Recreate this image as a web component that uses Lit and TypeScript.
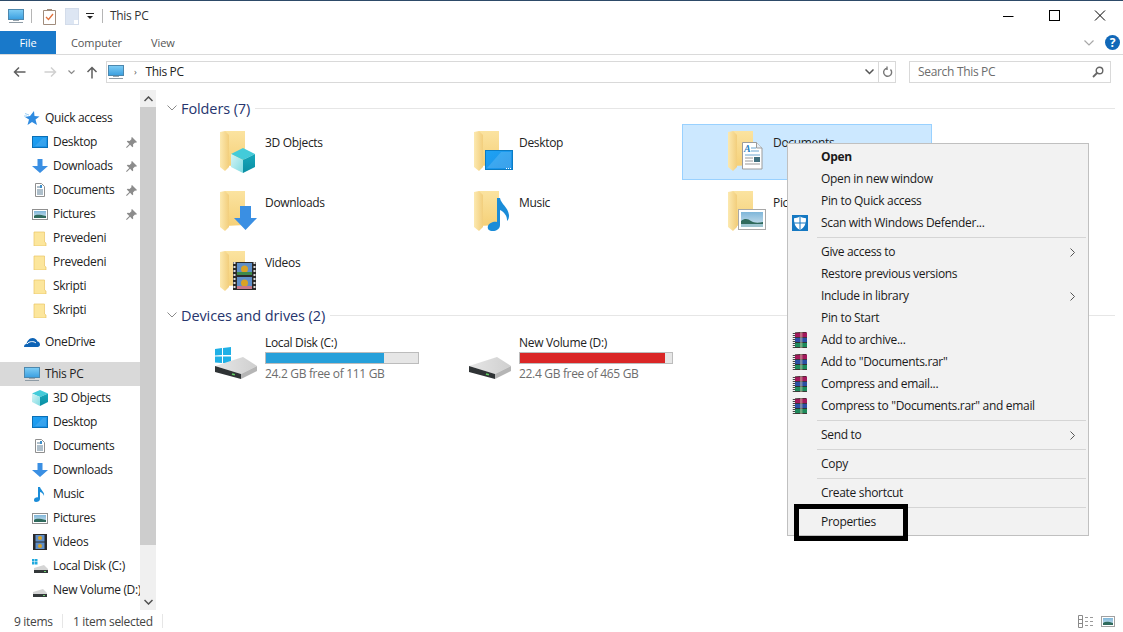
import { LitElement, html, css, svg } from "lit";
import { customElement } from "lit/decorators.js";

const folder = svg`<polygon points="9,3 29,3 29,37 9,38" fill="url(#fb)"/><polygon points="4,4 9,3 13,7 13,39 9,43 4,39" fill="url(#fd)"/>`;

const cube = (o = 0) => svg`<g transform="translate(${o} 0)"><polygon points="27,20 39,26 27,32 15,26" fill="#43cbd9"/><polygon points="15,26 27,32 27,45 15,39" fill="url(#cl)"/><polygon points="39,26 27,32 27,45 39,39" fill="url(#cr)"/></g>`;
const monitor = svg`<rect x="15.5" y="22.5" width="27" height="19" fill="url(#scr)" stroke="#0b7cc4"/><polygon points="17,40 31,24 41,24 41,40" fill="#fff" opacity=".14"/><path d="M36 40.5h5" stroke="#fff" stroke-dasharray="1 1"/>`;
const arrow = svg`<polygon points="24,18 35,18 35,30 41,30 29.5,42 18,30 24,30" fill="#3a8fe3"/>`;
const note = svg`<path d="M27 10h3c1 6 8 9 9 17 .2 2-.5 5-2 6 .5-5-3-9-7-11v15c0 4-4 6-7 6-4 0-6-2-5-5 1-3 6-5 9-4z" fill="#1a8cd8"/>`;
const picture = svg`<rect x="14.5" y="21.5" width="27" height="20" fill="#fff" stroke="#a8a8a8"/><rect x="17" y="24" width="22" height="15" fill="url(#sky)"/><path d="M17 33c4-3 7-2 10 0s7 2 12 1v5H17z" fill="#2f6a5c"/><rect x="17" y="36" width="22" height="3" fill="#9cc4cf"/>`;
const doc = svg`<path d="M18.5 14.5h14l5.500 5.500v21h-19.500z" fill="#fff" stroke="#9b9b9b"/><path d="M32.500 14.500v5.500h5.500" fill="#e6eef5" stroke="#9b9b9b"/><text x="20" y="24" font-family="Liberation Serif, serif" font-style="italic" font-weight="700" font-size="10" fill="#2a7fc0">A</text><path d="M27 20h5M27 23h8M21 27h15" stroke="#6aa5cf"/><path d="M21 30h8M21 33h8M21 36h15" stroke="#999"/><rect x="30" y="29" width="6" height="5" fill="#41707e"/>`;
const film = svg`<rect x="17" y="14" width="23" height="28" fill="#2a2a2a"/><path d="M18.500 14v28M38.500 14v28" stroke="#ddd" stroke-width="2" stroke-dasharray="2 2"/><rect x="21" y="15" width="15" height="12" fill="#5f8fc9"/><rect x="21" y="29" width="15" height="12" fill="#5f8fc9"/><circle cx="28.500" cy="21" r="3.500" fill="#d9a326"/><circle cx="28.500" cy="35" r="3.500" fill="#d9a326"/><rect x="21" y="24" width="15" height="3" fill="#3f8a4a"/><rect x="21" y="38" width="15" height="3" fill="#c9788a"/>`;

const bigIcon = (o: unknown) => html`<svg class="big" width="48" height="50" viewBox="0 0 48 50">${folder}${o}</svg>`;

const s = (c: unknown, w = 16) => html`<svg width=${w} height="16" viewBox="0 0 16 16">${c}</svg>`;
const pcIcon = svg`<rect x=".5" y="1.500" width="15" height="10" fill="url(#scr2)" stroke="#4c87ad"/><rect x="5" y="12" width="6" height="1" fill="#9aa7b0"/><rect x="1" y="14" width="14" height="1" fill="#8e9ba5"/>`;
const icons: Record<string, unknown> = {
  star: svg`<polygon points="10,1 10.500,6 15.500,6.500 11.500,9.500 13,15 8,12 3.500,15 5,9.500 1,7 6,6" fill="#2f8be0"/><path d="M1 3.500l4 1.500M0 6h3" stroke="#9ed0f5"/>`,
  desktop: svg`<rect x=".5" y="2.500" width="15" height="11" fill="url(#scr)" stroke="#0b6fb5"/><polygon points="3,12 11,4 14,4 14,12" fill="#fff" opacity=".12"/>`,
  down: svg`<polygon points="5.500,1 10.500,1 10.500,8 16,8 8,15 0,8 5.500,8" fill="#3a8fe3"/>`,
  docs: svg`<path d="M3.500 1.500h6l3 3v10h-9z" fill="#fff" stroke="#8f8f8f"/><path d="M5 5h3M5 8h6M5 10h6M5 12h6" stroke="#5c7f96"/><rect x="8" y="3" width="2" height="3" fill="#3f8fc9"/>`,
  pics: svg`<rect x=".5" y="3.500" width="15" height="10" fill="#fff" stroke="#8f8f8f"/><rect x="2" y="5" width="12" height="7" fill="url(#sky)"/><path d="M2 10c3-2 6-1 12 0v2H2z" fill="#2f6a5c"/>`,
  fold: svg`<path d="M2.500 2.500h9.500v11.500h2v1.500h-11.500z" fill="#fde38f"/><path d="M2 2h10.500v10l1.500 1v3h-12z" fill="#fce69c" stroke="#e9c466" stroke-width=".7"/>`,
  cloud: svg`<path d="M0 13c0-2 1-3 2.500-3 .5-3 3-6 6-6 2.500 0 4 1.500 5 3.500 1.500 0 2.500 1.500 2.500 3 0 1.500-1 2.500-2.500 2.500z" fill="#0d63b5"/><path d="M3 10c2-3 7-3 9-1" stroke="#fff" fill="none"/>`,
  pc: pcIcon,
  cube: svg`<polygon points="8,0 16,3.500 8,7 0,3.500" fill="#43cbd9"/><polygon points="0,3.500 8,7 8,16 0,12" fill="url(#cl)"/><polygon points="16,3.500 8,7 8,16 16,12" fill="url(#cr)"/>`,
  music: svg`<path d="M6 1h2c.5 3 5 5 4 9-.5-2-2-3.500-4-4v7c0 2-2 3-4 3-1.500 0-2-1-2-2 0-2 2.500-3 4-2.500z" fill="#1a8cd8"/>`,
  video: svg`<rect x="1" y="0" width="14" height="16" fill="#2a2a2a"/><rect x="3.500" y="1" width="9" height="6.500" fill="#5f8fc9"/><rect x="3.500" y="8.500" width="9" height="6.500" fill="#5f8fc9"/><circle cx="8" cy="4" r="2" fill="#d9a326"/><circle cx="8" cy="12" r="2" fill="#d9a326"/>`,
  diskC: svg`<rect x="0" y="1" width="2.500" height="2.500" fill="#1fa9de"/><rect x="3" y="1" width="2.500" height="2.500" fill="#1fa9de"/><rect x="0" y="4" width="2.500" height="2.500" fill="#1fa9de"/><rect x="3" y="4" width="2.500" height="2.500" fill="#1fa9de"/><polygon points="2,10 12,7 16,11 16,15 2,15" fill="#d5d5d5"/><rect x="2" y="12" width="14" height="3" fill="#33383a"/><rect x="12" y="13" width="2" height="1" fill="#6fd06f"/>`,
  disk: svg`<polygon points="1,10 11,7 15,11 15,15 1,15" fill="#d5d5d5"/><rect x="1" y="12" width="14" height="3" fill="#33383a"/><rect x="11" y="13" width="2" height="1" fill="#6fd06f"/>`,
  defender: svg`<rect width="16" height="16" fill="#1578c2"/><path d="M8 1.500c2 1.200 4 1.700 6 1.700 0 6-1.500 9.500-6 11.500-4.500-2-6-5.500-6-11.500 2 0 4-.5 6-1.700z" fill="#fff"/><path d="M8 1.500v13M2 8h12" stroke="#1578c2"/>`,
  rar: svg`<path d="M3 1l11-1 1 1v4H3z" fill="#a3195b"/><path d="M3 5.500h12v5H3z" fill="#2b4fa5"/><path d="M3 10.500h12v5H3z" fill="#1d8a5b"/><path d="M3 .8l11.500-.6M3 5.500h12M3 10.500h12M3 15.500h12" stroke="#2a1a1a" stroke-width=".8"/><path d="M2 1v15" stroke="#444" stroke-width="2.500" stroke-dasharray="1 1"/><rect x="8" y="0" width="2.500" height="16" fill="#d8cfae" opacity=".45"/>`,
};

const pin = html`<svg class="pin" width="11" height="11" viewBox="0 0 11 11"><path d="M6 0l5 5-1 .8-1-.4-2 2 .2 2-.8.8-2.300-2.500L.8 11 0 10.200l3.300-3.300L.8 4.600l.8-.8 2 .2 2-2-.4-1z" fill="#8c8c8c"/></svg>`;

const drive = (win: boolean) => html`<svg class="drive" width="44" height="34" viewBox="0 0 44 34">
  ${win ? svg`<g fill="#1fb0e6"><polygon points="1,3 8,2 8,9 1,9.500"/><polygon points="9,2 17,1 17,9 9,9"/><polygon points="1,10.500 8,10.500 8,17 1,16.500"/><polygon points="9,10.500 17,10.500 17,18 9,17"/></g>` : ""}
  <polygon points="1,20 29,11 43,20 27,28" fill="url(#dt)"/>
  <polygon points="1,20 27,28 27,33 1,26" fill="#2f3335"/>
  <polygon points="27,28 43,20 43,25 27,33" fill="#b5b5b5"/>
  <rect x="18" y="27.500" width="3" height="1.500" fill="#63d063" transform="rotate(15 19 28)"/>
</svg>`;

const chev = html`<svg class="chev" width="10" height="6" viewBox="0 0 10 6"><path d="M.5.500L5 5 9.500.500" fill="none" stroke="#8a8a8a"/></svg>`;
const subArrow = html`<svg class="sub" width="5" height="9" viewBox="0 0 5 9"><path d="M.5.500l4 4-4 4" fill="none" stroke="#555"/></svg>`;

type Nav = { t: string; i: string; top?: boolean; pin?: boolean; gap?: boolean; sel?: boolean };
const nav: Nav[] = [
  { t: "Quick access", i: "star", top: true },
  { t: "Desktop", i: "desktop", pin: true },
  { t: "Downloads", i: "down", pin: true },
  { t: "Documents", i: "docs", pin: true },
  { t: "Pictures", i: "pics", pin: true },
  { t: "Prevedeni", i: "fold" },
  { t: "Prevedeni", i: "fold" },
  { t: "Skripti", i: "fold" },
  { t: "Skripti", i: "fold" },
  { t: "OneDrive", i: "cloud", top: true, gap: true },
  { t: "This PC", i: "pc", top: true, gap: true, sel: true },
  { t: "3D Objects", i: "cube" },
  { t: "Desktop", i: "desktop" },
  { t: "Documents", i: "docs" },
  { t: "Downloads", i: "down" },
  { t: "Music", i: "music" },
  { t: "Pictures", i: "pics" },
  { t: "Videos", i: "video" },
  { t: "Local Disk (C:)", i: "diskC" },
  { t: "New Volume (D:)", i: "disk" },
];

const tiles: { t: string; o: unknown; sel?: boolean }[] = [
  { t: "3D Objects", o: cube() },
  { t: "Desktop", o: monitor },
  { t: "Documents", o: doc, sel: true },
  { t: "Downloads", o: arrow },
  { t: "Music", o: note },
  { t: "Pictures", o: picture },
  { t: "Videos", o: film },
];

type Mi = { t?: string; i?: string; b?: boolean; sub?: boolean };
const menu: Mi[] = [
  { t: "Open", b: true },
  { t: "Open in new window" },
  { t: "Pin to Quick access" },
  { t: "Scan with Windows Defender...", i: "defender" },
  {},
  { t: "Give access to", sub: true },
  { t: "Restore previous versions" },
  { t: "Include in library", sub: true },
  { t: "Pin to Start" },
  { t: "Add to archive...", i: "rar" },
  { t: 'Add to "Documents.rar"', i: "rar" },
  { t: "Compress and email...", i: "rar" },
  { t: 'Compress to "Documents.rar" and email', i: "rar" },
  {},
  { t: "Send to", sub: true },
  {},
  { t: "Copy" },
  {},
  { t: "Create shortcut" },
  {},
  { t: "Properties" },
];

@customElement("app-root")
export class AppRoot extends LitElement {
  static styles = css`
    :host { display: flex; flex-direction: column; position: relative; width: 1123px; height: 632px; overflow: hidden; background: #fff; color: #1a1a1a; font: 12px "Open Sans", "Noto Sans", sans-serif; letter-spacing: -0.32px; }
    svg { display: block; flex: none; }
    .defs { width: 0; height: 0; position: absolute; }
    .title { height: 30px; border-top: 1px solid #2d4a68; display: flex; align-items: center; padding-left: 8px; }
    .vsep { width: 1px; height: 14px; background: #b5b5b5; }
    .ttext { margin: 0 0 2px 7px; color: #333; }
    .winbtns { margin-left: auto; display: flex; gap: 30px; padding-right: 15px; align-items: center; }
    .ribbon { height: 23px; border-bottom: 1px solid #dadada; display: flex; align-items: stretch; font-size: 11px; color: #555; letter-spacing: -0.1px; }
    .tab-file { width: 56px; background: #1979ca; color: #fff; display: flex; align-items: center; justify-content: center; }
    .tab { display: flex; align-items: center; }
    .tab.c { margin-left: 15px; }
    .tab.v { margin-left: 29px; }
    .rib-right { margin-left: auto; display: flex; align-items: center; gap: 11px; padding-right: 3px; }
    .help { width: 15px; height: 15px; border-radius: 50%; background: #1168b8; color: #fff; font: 700 12px "Open Sans", sans-serif; display: flex; align-items: center; justify-content: center; }
    .addr { height: 35px; display: flex; padding: 6px 13px 0; box-sizing: border-box; align-items: flex-start; }
    .navbtns { display: flex; align-items: center; height: 22px; width: 93px; flex: none; }
    .addrbox { width: 788px; height: 20px; margin-right: 13px; border: 1px solid #d9d9d9; display: flex; align-items: center; flex: none; }
    .addrbox > svg:first-child { margin-left: 1px; }
    .addrbox .path { margin: 0 0 2px 10px; color: #555; font-size: 9px; }
    .addrbox .ptext { margin: 0 0 2px 9px; color: #222; }
    .addrbox .drop { margin-left: auto; margin-right: 4px; }
    .refresh { width: 16px; height: 20px; border-left: 1px solid #d9d9d9; display: flex; align-items: center; justify-content: center; }
    .search { width: 186px; height: 20px; border: 1px solid #d9d9d9; display: flex; align-items: center; padding: 0 6px 0 8px; color: #6d6d6d; flex: none; }
    .search span { flex: 1; margin-bottom: 2px; }
    .main { height: 520px; display: flex; }
    .nav { width: 140px; flex: none; padding-top: 16px; box-sizing: border-box; overflow: hidden; }
    .row { height: 24px; display: flex; align-items: center; padding-left: 32px; gap: 5px; white-space: nowrap; color: #222; position: relative; }
    .row span { margin-bottom: 2px; }
    .row.top { padding-left: 24px; }
    .row.gap { margin-top: 8px; }
    .row.sel { background: #d9d9d9; }
    .pin { margin-left: auto; margin-right: 3px; }
    .sb { width: 16px; flex: none; background: #f0f0f0; display: flex; flex-direction: column; }
    .sb .arr { height: 17px; display: flex; align-items: center; justify-content: center; }
    .sb .thumb { height: 438px; background: #cdcdcd; }
    .sb .rest { flex: 1; }
    .content { flex: 1; padding: 7px 8px 0 11px; }
    .ghead { height: 22px; display: flex; align-items: center; color: #26356e; font-size: 14.500px; letter-spacing: -0.1px; white-space: nowrap; }
    .ghead .chev { margin-right: 4px; }
    .ghead .line { flex: 1; height: 1px; background: #e6e6e6; margin-left: 5px; }
    .grid { display: grid; grid-template-columns: repeat(3, 254px); margin: 5px 0 0 7px; }
    .tile { height: 56px; width: 250px; margin: 0 0 4px 0; border: 1px solid transparent; box-sizing: border-box; position: relative; display: flex; padding-left: 41px; gap: 1px; }
    .tile.sel { background: #cce8ff; border-color: #99d1ff; }
    .tile .big { margin-top: 3px; }
    .tile span { margin-top: 9px; color: #222; }
    .dgrid { display: grid; grid-template-columns: repeat(2, 254px); margin: 5px 0 0 7px; }
    .dtile { height: 56px; display: flex; padding-left: 40px; gap: 7px; box-sizing: border-box; }
    .drive { margin-top: 15px; }
    .dinfo { width: 154px; display: flex; flex-direction: column; padding-top: 4px; }
    .dname { height: 15px; color: #222; line-height: 15px; }
    .dbar { height: 10px; background: #e6e6e6; border: 1px solid #bcbcbc; margin: 2px 0 1px; }
    .dfill { height: 100%; }
    .dfree { color: #6d6d6d; line-height: 17px; }
    .status { height: 22px; display: flex; align-items: center; padding-left: 14px; color: #444; }
    .status .s1 { width: 48px; }
    .status .sp { width: 1px; height: 14px; background: #e6e6e6; }
    .status .s2 { margin-left: 10px; width: 89px; }
    .views { margin-left: auto; display: flex; gap: 7px; padding-right: 8px; align-items: center; }
    .menu { position: absolute; left: 787px; top: 143px; width: 302px; height: 393px; box-sizing: border-box; border: 1px solid #c0c0c0; background: #f2f2f2; padding: 2px 2px 2px 0; color: #1a1a1a; }
    .mi { height: 22px; display: flex; align-items: center; white-space: nowrap; position: relative; }
    .mi span { margin-bottom: 2px; }
    .mi .mic { width: 33px; padding-left: 4px; box-sizing: border-box; flex: none; }
    .mi.b { font-weight: 700; }
    .sub { margin-left: auto; margin-right: 11px; }
    .msep { height: 1px; background: #d5d5d5; margin: 3px 0 3px 29px; }
    .mark { position: absolute; left: 794px; top: 504px; width: 114px; height: 37px; box-sizing: border-box; border: 5px solid #000; }
  `;

  render() {
    return html`
      <svg class="defs" aria-hidden="true"><defs>
        <linearGradient id="fb" x1="0" y1="0" x2="0" y2="1"><stop offset="0" stop-color="#fbe3a0"/><stop offset="1" stop-color="#f5d078"/></linearGradient>
        <linearGradient id="fd" x1="0" y1="0" x2="1" y2="0"><stop offset="0" stop-color="#fce9b0"/><stop offset="1" stop-color="#f2ce7c"/></linearGradient>
        <linearGradient id="cl" x1="0" y1="0" x2="1" y2="1"><stop offset="0" stop-color="#d5f4f5"/><stop offset="1" stop-color="#7fdbe2"/></linearGradient>
        <linearGradient id="cr" x1="0" y1="0" x2="0" y2="1"><stop offset="0" stop-color="#17a8bb"/><stop offset="1" stop-color="#0a8ea3"/></linearGradient>
        <linearGradient id="scr" x1="0" y1="0" x2="1" y2="1"><stop offset="0" stop-color="#1fa3f5"/><stop offset="1" stop-color="#1a90e6"/></linearGradient>
        <linearGradient id="scr2" x1="0" y1="0" x2="0" y2="1"><stop offset="0" stop-color="#7fcdf5"/><stop offset="1" stop-color="#3a9fe0"/></linearGradient>
        <linearGradient id="sky" x1="0" y1="0" x2="0" y2="1"><stop offset="0" stop-color="#7fb6d9"/><stop offset="1" stop-color="#d0e4ee"/></linearGradient>
        <linearGradient id="dt" x1="0" y1="0" x2="1" y2="0"><stop offset="0" stop-color="#e6e6e6"/><stop offset="1" stop-color="#cfcfcf"/></linearGradient>
      </defs></svg>

      <div class="title">
        ${s(pcIcon)}
        <div class="vsep" style="margin-left:7px"></div>
        <svg style="margin-left:11px" width="13" height="17" viewBox="0 0 13 17"><path d="M.5 2.500h12v14H.5z" fill="#fff" stroke="#a08c7c"/><rect x="4" y="1" width="5" height="2" fill="#a08c7c"/><path d="M3 9l2.500 2.500L10 6" fill="none" stroke="#e0703a" stroke-width="1.300"/></svg>
        <svg style="margin-left:9px" width="14" height="17" viewBox="0 0 14 17"><rect x=".5" y=".5" width="13" height="16" fill="#dde6f3" stroke="#d3dcea"/><rect x="9" y="12" width="4" height="4" fill="#fff"/></svg>
        <svg style="margin-left:7px" width="8" height="8" viewBox="0 0 8 8"><rect y="1" width="8" height="1" fill="#222"/><polygon points="1,4 7,4 4,7" fill="#222"/></svg>
        <div class="vsep" style="margin-left:8px"></div>
        <span class="ttext">This PC</span>
        <div class="winbtns">
          <svg width="16" height="12" viewBox="0 0 16 12"><path d="M3 6.500h10.500" stroke="#000"/></svg>
          <svg width="16" height="12" viewBox="0 0 16 12"><rect x="3.500" y=".5" width="10" height="10" fill="none" stroke="#000"/></svg>
          <svg width="16" height="12" viewBox="0 0 16 12"><path d="M3 .5l10 10M13 .5l-10 10" stroke="#000"/></svg>
        </div>
      </div>

      <div class="ribbon">
        <div class="tab-file">File</div>
        <div class="tab c">Computer</div>
        <div class="tab v">View</div>
        <div class="rib-right">
          <svg width="10" height="6" viewBox="0 0 10 6"><path d="M.5.500L5 5 9.500.500" fill="none" stroke="#a8a8a8" stroke-width="1.200"/></svg>
          <div class="help">?</div>
        </div>
      </div>

      <div class="addr">
        <div class="navbtns">
          <svg width="13" height="12" viewBox="0 0 13 12"><path d="M12.500 6H1.500M6 1.500L1.500 6 6 10.500" fill="none" stroke="#5f5f5f" stroke-width="1.500"/></svg>
          <svg style="margin-left:18px" width="13" height="12" viewBox="0 0 13 12"><path d="M.5 6h11M7 1.500L11.500 6 7 10.500" fill="none" stroke="#d0d0d0" stroke-width="1.500"/></svg>
          <svg style="margin-left:11px" width="7" height="5" viewBox="0 0 7 5"><path d="M.5.500l3 3 3-3" fill="none" stroke="#8a8a8a" stroke-width="1.200"/></svg>
          <svg style="margin-left:11px" width="12" height="13" viewBox="0 0 12 13"><path d="M6 12.500V1.500M1.500 6L6 1.500 10.500 6" fill="none" stroke="#5f5f5f" stroke-width="1.500"/></svg>
        </div>
        <div class="addrbox">
          ${s(pcIcon)}
          <span class="path">›</span>
          <span class="ptext">This PC</span>
          <svg class="drop" width="9" height="6" viewBox="0 0 9 6"><path d="M.5.500l4 4 4-4" fill="none" stroke="#555" stroke-width="1.500"/></svg>
          <div class="refresh"><svg width="11" height="12" viewBox="0 0 11 12"><path d="M8.500 3.500a4 4 0 1 1-3-1.200M5 .5v3.500" fill="none" stroke="#777" stroke-width="1.400"/></svg></div>
        </div>
        <div class="search">
          <span>Search This PC</span>
          <svg width="12" height="12" viewBox="0 0 12 12"><circle cx="7.500" cy="4.500" r="3.300" fill="none" stroke="#666" stroke-width="1.400"/><path d="M5 7L1 11" stroke="#666" stroke-width="1.800"/></svg>
        </div>
      </div>

      <div class="main">
        <div class="nav">
          ${nav.map((n) => html`<div class="row ${n.top ? "top" : ""} ${n.gap ? "gap" : ""} ${n.sel ? "sel" : ""}">
            ${s(icons[n.i])}<span>${n.t}</span>${n.pin ? pin : ""}
          </div>`)}
        </div>
        <div class="sb">
          <div class="arr"><svg width="9" height="6" viewBox="0 0 9 6"><path d="M.5 5l4-4 4 4" fill="none" stroke="#505050" stroke-width="1.500"/></svg></div>
          <div class="thumb"></div>
          <div class="rest"></div>
          <div class="arr"><svg width="9" height="6" viewBox="0 0 9 6"><path d="M.5 1l4 4 4-4" fill="none" stroke="#505050" stroke-width="1.500"/></svg></div>
        </div>
        <div class="content">
          <div class="ghead">${chev}<span>Folders (7)</span><div class="line"></div></div>
          <div class="grid">
            ${tiles.map((t) => html`<div class="tile ${t.sel ? "sel" : ""}">${bigIcon(t.o)}<span>${t.t}</span></div>`)}
          </div>
          <div class="ghead">${chev}<span>Devices and drives (2)</span><div class="line"></div></div>
          <div class="dgrid">
            ${[
              { n: "Local Disk (C:)", f: "24.2 GB free of 111 GB", w: 77.5, c: "#26a0da", win: true },
              { n: "New Volume (D:)", f: "22.4 GB free of 465 GB", w: 95.3, c: "#da2626", win: false },
            ].map((d) => html`<div class="dtile">${drive(d.win)}
              <div class="dinfo"><div class="dname">${d.n}</div>
                <div class="dbar"><div class="dfill" style="width:${d.w}%;background:${d.c}"></div></div>
                <div class="dfree">${d.f}</div></div></div>`)}
          </div>
        </div>
      </div>

      <div class="status">
        <span class="s1">9 items</span><div class="sp"></div>
        <span class="s2">1 item selected</span><div class="sp"></div>
        <div class="views">
          <svg width="16" height="13" viewBox="0 0 16 13"><path d="M.5.500h4v12h-4zM.5 4.500h4M.5 8.500h4" fill="#fff" stroke="#8a8a8a"/><path d="M7 2.500h3M12 2.500h3M7 6.500h3M12 6.500h3M7 10.500h3M12 10.500h3" stroke="#9a9a9a"/></svg>
          <svg width="14" height="11" viewBox="0 0 14 11"><rect x=".5" y=".5" width="13" height="10" fill="#fff" stroke="#a0a0a0"/><rect x="2" y="2" width="10" height="7" fill="url(#sky)"/><path d="M2 7c3-2 6-1 10 0v2H2z" fill="#2f6a5c"/></svg>
        </div>
      </div>

      <div class="menu">
        ${menu.map((m) => m.t
          ? html`<div class="mi ${m.b ? "b" : ""}"><div class="mic">${m.i ? s(icons[m.i]) : ""}</div><span>${m.t}</span>${m.sub ? subArrow : ""}</div>`
          : html`<div class="msep"></div>`)}
      </div>
      <div class="mark"></div>
    `;
  }
}
